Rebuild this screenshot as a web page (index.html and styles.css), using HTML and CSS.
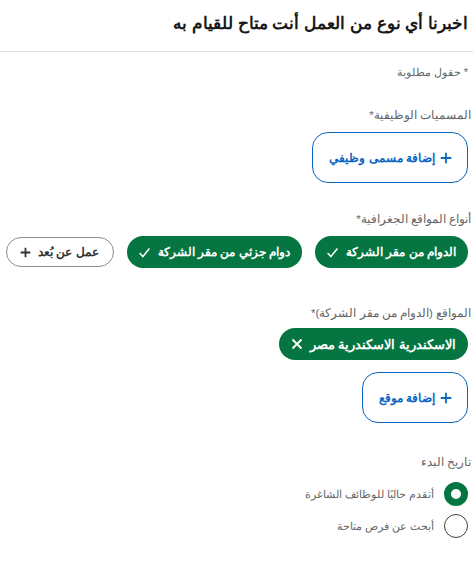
FILE: index.html
```html
<!DOCTYPE html>
<html lang="ar" dir="rtl">
<head>
<meta charset="utf-8">
<link rel="stylesheet" href="styles.css">
</head>
<body>
<header class="header">
  <h1 class="title">اخبرنا أي نوع من العمل أنت متاح للقيام به</h1>
</header>
<main class="form">
  <p class="required">* حقول مطلوبة</p>

  <p class="label label-titles">المسميات الوظيفية*</p>
  <button class="add-btn add-title" type="button">
    <svg class="plus" viewBox="0 0 16 16" width="12" height="12"><path d="M8 1v14M1 8h14" stroke="currentColor" stroke-width="2.4" fill="none"/></svg>
    <span>إضافة مسمى وظيفي</span>
  </button>

  <p class="label label-geo">أنواع المواقع الجغرافية*</p>
  <div class="chips">
    <span class="chip chip-on">الدوام من مقر الشركة
      <svg class="icon" viewBox="0 0 16 16" width="13" height="13"><path d="M2 8.5l4 4.5 8-10" stroke="currentColor" stroke-width="1.8" fill="none"/></svg>
    </span>
    <span class="chip chip-on">دوام جزئي من مقر الشركة
      <svg class="icon" viewBox="0 0 16 16" width="13" height="13"><path d="M2 8.5l4 4.5 8-10" stroke="currentColor" stroke-width="1.8" fill="none"/></svg>
    </span>
    <span class="chip chip-off">عمل عن بُعد
      <svg class="icon" viewBox="0 0 16 16" width="11" height="11"><path d="M8 1v14M1 8h14" stroke="currentColor" stroke-width="2.6" fill="none"/></svg>
    </span>
  </div>

  <p class="label label-loc">المواقع (الدوام من مقر الشركة)*</p>
  <div class="chips">
    <span class="chip chip-on chip-loc">الاسكندرية الاسكندرية مصر
      <svg class="icon" viewBox="0 0 16 16" width="12" height="12"><path d="M2 2l12 12M14 2L2 14" stroke="currentColor" stroke-width="2.4" fill="none"/></svg>
    </span>
  </div>
  <button class="add-btn add-loc" type="button">
    <svg class="plus" viewBox="0 0 16 16" width="12" height="12"><path d="M8 1v14M1 8h14" stroke="currentColor" stroke-width="2.4" fill="none"/></svg>
    <span>إضافة موقع</span>
  </button>

  <p class="label label-date">تاريخ البدء</p>
  <div class="radios">
    <label class="radio-row"><span class="radio radio-on"></span><span class="radio-text">أتقدم حاليًا للوظائف الشاغرة</span></label>
    <label class="radio-row"><span class="radio"></span><span class="radio-text">أبحث عن فرص متاحة</span></label>
  </div>

  <p class="label label-next">أنواع الوظائف</p>
</main>
</body>
</html>
```

FILE: styles.css
```css
* { box-sizing: border-box; }
html, body {
  margin: 0;
  padding: 0;
  background: #fff;
  overflow: hidden;
}
body {
  font-family: "Liberation Sans", sans-serif;
  color: #191919;
  direction: rtl;
  height: 567px;
}
.header {
  height: 52px;
  border-bottom: 1px solid #e0e0e0;
  display: flex;
  align-items: center;
  padding: 0 5px 4px;
}
.title {
  margin: 0;
  font-size: 17px;
  font-weight: 700;
  line-height: 24px;
  color: #191919;
}
.form {
  padding: 0 5px 0 0;
  display: flex;
  flex-direction: column;
  align-items: flex-start;
}
.required {
  margin: 12px 0 0;
  font-size: 11px;
  line-height: 16px;
  color: #666;
}
.label {
  margin: 0;
  font-size: 11.5px;
  line-height: 16px;
  color: #666;
  margin-right: -3px;
}
.label-titles { margin-top: 27px; }
.label-geo { margin-top: 28px; }
.label-loc { margin-top: 37px; }
.label-date { margin-top: 31px; }
.label-next { margin-top: 29px; }

.add-btn {
  margin-top: 9px;
  height: 51px;
  border: 1px solid #0a66c2;
  border-radius: 16px;
  background: #fff;
  color: #0a66c2;
  font-family: inherit;
  font-size: 12px;
  font-weight: 700;
  padding: 0 15px 0 16px;
  display: flex;
  align-items: center;
  gap: 5px;
}
.add-loc { margin-top: 12px; }
.plus { flex: none; }

.chips {
  margin-top: 9px;
  display: flex;
  flex-wrap: nowrap;
  gap: 13px;
}
.label-loc + .chips { margin-top: 7px; }
.chip {
  height: 32px;
  border-radius: 16px;
  padding: 0 12px 0 11px;
  display: inline-flex;
  align-items: center;
  gap: 7px;
  font-size: 12px;
  font-weight: 700;
  white-space: nowrap;
  flex: none;
}
.chip-on {
  background: #057642;
  color: #fff;
}
.chip-loc {
  font-size: 13px;
  padding-left: 12px;
}
.chip-off {
  background: #fff;
  color: #333;
  border: 1px solid #8c8c8c;
  height: 30px;
  margin-top: 1px;
  padding: 0 14px 0 13px;
}
.icon { flex: none; }

.radios {
  margin-top: 12px;
  display: flex;
  flex-direction: column;
  gap: 8px;
}
.radio-row {
  display: flex;
  align-items: center;
  gap: 10px;
}
.radio {
  width: 24px;
  height: 24px;
  border-radius: 50%;
  border: 1px solid #404040;
  flex: none;
}
.radio-on {
  border: 7px solid #057642;
}
.radio-text {
  font-size: 11px;
  color: #666;
}
```
